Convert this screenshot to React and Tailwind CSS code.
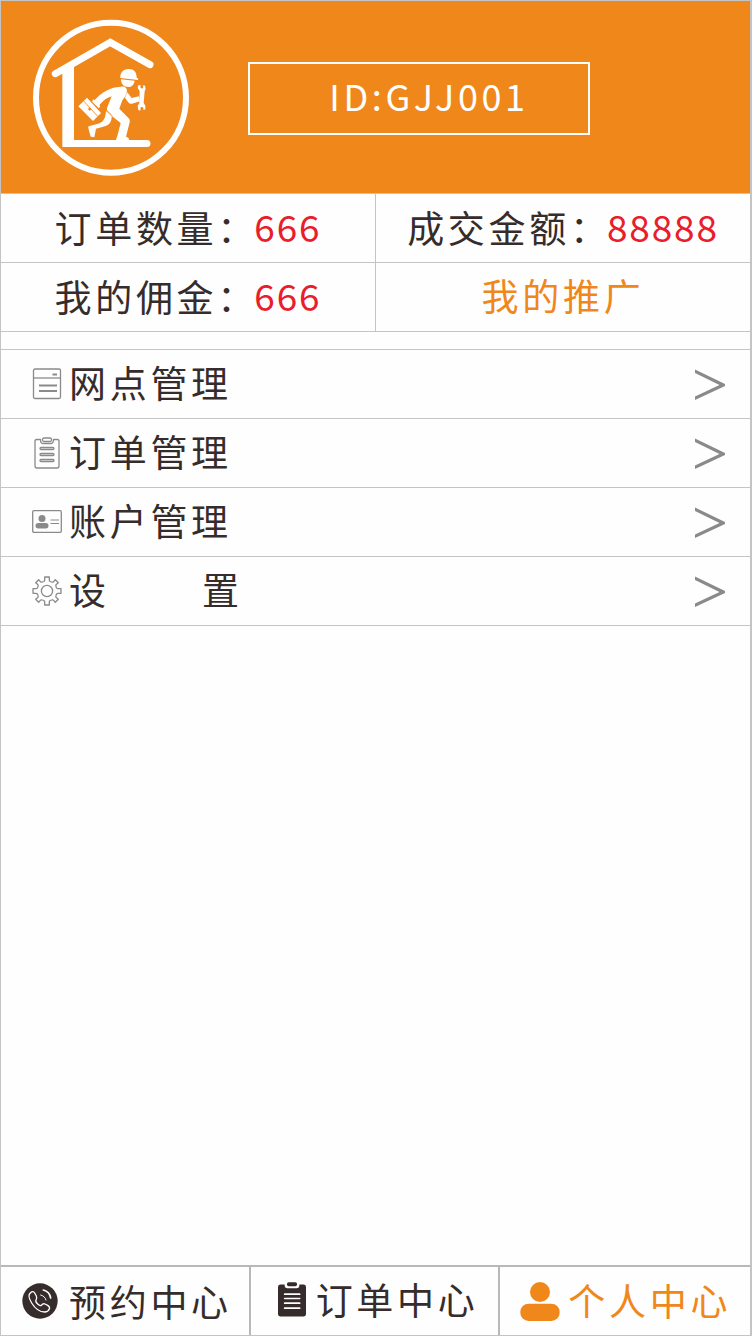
import React from "react";

const outline = { fill: "none", stroke: "#8a8a8a", strokeWidth: 1.3, strokeLinejoin: "round" };

function Logo() {
  return (
    <svg viewBox="36 27 474 474" className="size-[158px] shrink-0" role="img" aria-label="维修服务">
      <circle cx="273" cy="263" r="225" fill="none" stroke="#fff" strokeWidth="18" />
      <path d="M106 191L271 97L390 164" fill="none" stroke="#fff" strokeWidth="21" strokeLinecap="round" strokeLinejoin="miter" />
      <path d="M127 176L162 156V390H381a10.500 10.500 0 0 1 0 21H127Z" fill="#fff" />
      <g fill="#fff">
        <path d="M301 201C301 187 311 177 326 177C342 177 350 187 350 203L355 206L354 210L301 204Z" />
        <path d="M303 208L344 212C342 224 335 231 324 231C311 231 303 222 303 208Z" />
        <path d="M303 230C314 228 321 233 321 243C321 253 313 263 307 271L298 296L326 325C329 328 330 332 329 337L318 380C325 382 328 385 327 391H288C289 383 292 379 293 374L302 339L267 311C260 304 259 297 263 289L275 259C261 263 252 270 241 282L235 289L218 277L225 269C240 253 258 240 278 234C287 231 295 231 303 230Z" />
        <path d="M258 303L275 319C275 334 270 343 257 348L228 356L223 382L212 380L204 350L211 347C221 344 237 342 246 335C254 329 257 318 258 303Z" />
        <path d="M322 247L335 264L357 259L360 274L336 281C331 282 327 280 324 276L315 263Z" />
        <path d="M355 226L353 234L359 243L358 279L353 288L355 300L361 302L362 292L369 291L371 301L376 298L376 287L371 279L374 243L377 236L375 227L370 225L369 235L362 235L361 225Z" />
        <path d="M175 289L201 263L243 309L219 333Z" />
        <path d="M216 274L221 268L239 285L240 291L235 294L230 288L225 284L221 280Z" />
      </g>
      <path d="M191 273L233 319" fill="none" stroke="#f0871b" strokeWidth="2.500" />
      <path d="M204 297L209 292L214 298L209 303Z" fill="#f0871b" />
      <path d="M261 302L276 317" fill="none" stroke="#f0871b" strokeWidth="3" />
    </svg>
  );
}

function BranchIcon() {
  return (
    <svg viewBox="0 0 30 32" className="h-8 w-[30px]" aria-hidden="true">
      <rect x="1.500" y="1" width="27" height="29.500" rx="1.500" {...outline} />
      <path d="M1.500 10H28.500" {...outline} />
      <path d="M20.500 6.500H25M7 17.500H25M7 23H25" stroke="#8a8a8a" strokeWidth="2" />
    </svg>
  );
}

function ClipboardIcon() {
  return (
    <svg viewBox="0 0 30 32" className="h-8 w-[30px]" aria-hidden="true">
      <g {...outline}>
        <path d="M8.500 2.500H4.500Q3 2.500 3 4V29Q3 31 5 31H25Q27 31 27 29V4Q27 2.500 25.500 2.500H21.500Q21.500 6.500 18.500 6.500H11Q8.500 6.500 8.500 2.500Z" />
        <rect x="10.500" y="1" width="9" height="3.500" rx="1.500" />
        <rect x="8" y="10.500" width="14" height="2" rx="1" />
        <rect x="8" y="16.500" width="14" height="2" rx="1" />
        <rect x="8" y="22.500" width="14" height="2" rx="1" />
      </g>
    </svg>
  );
}

function AccountIcon() {
  return (
    <svg viewBox="0 0 30 32" className="h-8 w-[30px]" aria-hidden="true">
      <rect x=".7" y="4.700" width="28.600" height="21.600" rx="1.200" {...outline} />
      <circle cx="10" cy="12.500" r="3.500" fill="#8a8a8a" />
      <rect x="3.500" y="17" width="13" height="5.500" rx="2.750" fill="#8a8a8a" />
      <path d="M18.500 14H27M18.500 17.500H27" stroke="#8a8a8a" strokeWidth="1.200" />
    </svg>
  );
}

function GearIcon() {
  return (
    <svg viewBox="-15 -16 30 32" className="h-8 w-[30px]" aria-hidden="true">
      <g {...outline}>
        <circle r="5.600" />
        <path d="M-3.200 -9.500Q-2.300 -10 -2.300 -11V-14H2.300V-11Q2.300 -10 3.200 -9.500L4.500 -9Q5.700 -8.500 6.500 -9.200L8.300 -11.300L11.300 -8.300L9.200 -6.500Q8.500 -5.700 9 -4.500L9.500 -3.200Q10 -2.300 11 -2.300H14V2.300H11Q10 2.300 9.500 3.200L9 4.500Q8.500 5.700 9.200 6.500L11.300 8.300L8.300 11.300L6.500 9.200Q5.700 8.500 4.500 9L3.200 9.500Q2.300 10 2.300 11V14H-2.300V11Q-2.300 10 -3.200 9.500L-4.500 9Q-5.700 8.500 -6.500 9.200L-8.300 11.300L-11.300 8.300L-9.200 6.500Q-8.500 5.700 -9 4.500L-9.500 3.200Q-10 2.300 -11 2.300H-14V-2.300H-11Q-10 -2.300 -9.500 -3.200L-9 -4.500Q-8.500 -5.700 -9.200 -6.500L-11.300 -8.300L-8.300 -11.300L-6.500 -9.200Q-5.700 -8.500 -4.500 -9Z" />
      </g>
    </svg>
  );
}

function Chevron() {
  return (
    <svg viewBox="0 0 30 32" className="ml-auto h-8 w-[30px]" aria-hidden="true">
      <path d="M0 1.500L30 16V18L0 32V28.500L24.500 17L0 5Z" fill="#8a8a8a" />
    </svg>
  );
}

function PhoneIcon() {
  return (
    <svg viewBox="0 0 108 108" className="size-9 shrink-0" aria-hidden="true">
      <circle cx="54" cy="54" r="53" fill="#352c2b" />
      <g fill="none" stroke="#fff" strokeWidth="4" strokeLinecap="round" strokeLinejoin="round">
        <path d="M26 29C19 34 20 46 29 60C39 76 54 87 68 87C75 87 80 83 82 78C84 73 82 70 77 67L69 63C64 61 61 63 58 67C55 69 52 68 47 63C42 58 40 54 42 51C45 47 45 44 43 39L38 30C35 25 30 25 26 29Z" />
        <path d="M64 21C76 24 84 33 86 45" strokeWidth="5" />
        <path d="M56 36C64 38 70 43 72 51" strokeWidth="3" />
      </g>
    </svg>
  );
}

function OrderIcon() {
  return (
    <svg viewBox="0 0 84 104" className="h-[35px] w-7 shrink-0" aria-hidden="true">
      <path d="M8 7H20V10Q20 18 28 18H56Q64 18 64 10V7H76Q84 7 84 15V95Q84 103 76 103H8Q0 103 0 95V15Q0 7 8 7Z" fill="#352c2b" />
      <rect x="27" y="0" width="30" height="12" rx="5" fill="#352c2b" />
      <path d="M20 36H65M20 49H65M20 63H65M20 78H65" stroke="#fff" strokeWidth="5" strokeLinecap="round" />
    </svg>
  );
}

function PersonIcon() {
  return (
    <svg viewBox="0 0 118 117" className="h-[39px] w-10 shrink-0" aria-hidden="true">
      <circle cx="59" cy="30" r="30" fill="#f0871b" />
      <rect x="0" y="65" width="118" height="52" rx="25" fill="#f0871b" />
    </svg>
  );
}

function Stat({ label, value }) {
  return (
    <div className="flex flex-1 items-center justify-center pb-[2px]">
      <dt className="tracking-widest">
        {label}
        <span className="tracking-normal">：</span>
      </dt>
      <dd className="pb-[2px] tracking-wider text-[#e91d2b]">{value}</dd>
    </div>
  );
}

const menu = [
  { label: "网点管理", Icon: BranchIcon },
  { label: "订单管理", Icon: ClipboardIcon },
  { label: "账户管理", Icon: AccountIcon },
  { label: "设置", Icon: GearIcon, spread: true },
];

const row = "flex h-[69px] border-b border-[#c4c4c4]";

export default function App() {
  return (
    <div className="flex min-h-screen flex-col border border-r-2 border-[#c4c4c4] bg-[#fefefe] font-['Noto_Sans_CJK_SC',sans-serif] text-[37px] leading-[48px] whitespace-nowrap text-[#352c2b]">
      <header className="flex h-[193px] items-center gap-[58px] border-b border-[#c4c4c4] bg-[#f0871b] pt-[2px] pl-[31px] text-white">
        <Logo />
        <div className="flex h-[73px] w-[342px] items-center justify-center border-2 border-white pb-[6px] pl-5 text-[36px] tracking-widest">
          ID:GJJ001
        </div>
      </header>

      <dl>
        <div className={row}>
          <Stat label="订单数量" value="666" />
          <div className="w-px bg-[#c4c4c4]" />
          <Stat label="成交金额" value="88888" />
        </div>
        <div className={row}>
          <Stat label="我的佣金" value="666" />
          <div className="w-px bg-[#c4c4c4]" />
          <div className="flex flex-1 items-center justify-center pb-1">
            <a href="#promotion" className="tracking-widest text-[#f0871b]">我的推广</a>
          </div>
        </div>
      </dl>

      <nav aria-label="管理" className="mt-[17px] border-t border-[#c4c4c4]">
        {menu.map(({ label, Icon, spread }) => (
          <a key={label} href={"#" + label} className={row + " items-center gap-[7px] pr-[25px] pl-[31px]"}>
            <Icon />
            {spread ? (
              <span className="flex gap-24 pb-1">
                <span>{label[0]}</span>
                <span>{label[1]}</span>
              </span>
            ) : (
              <span className="pb-1 tracking-widest">{label}</span>
            )}
            <Chevron />
          </a>
        ))}
      </nav>

      <nav aria-label="主导航" className="mt-auto grid h-[70px] grid-cols-3 divide-x-2 divide-[#b8b8b8] border-t-2 border-[#b8b8b8] tracking-widest">
        <a href="#booking" className="flex items-center gap-[11px] pb-px pl-[21px]">
          <PhoneIcon />
          <span>预约中心</span>
        </a>
        <a href="#orders" className="flex items-center gap-[10px] pb-[3px] pl-[27px]">
          <OrderIcon />
          <span className="pb-[2px]">订单中心</span>
        </a>
        <a href="#me" aria-current="page" className="flex items-center gap-[8px] pl-[20px] text-[#f0871b]">
          <PersonIcon />
          <span className="pb-[2px]">个人中心</span>
        </a>
      </nav>
    </div>
  );
}
